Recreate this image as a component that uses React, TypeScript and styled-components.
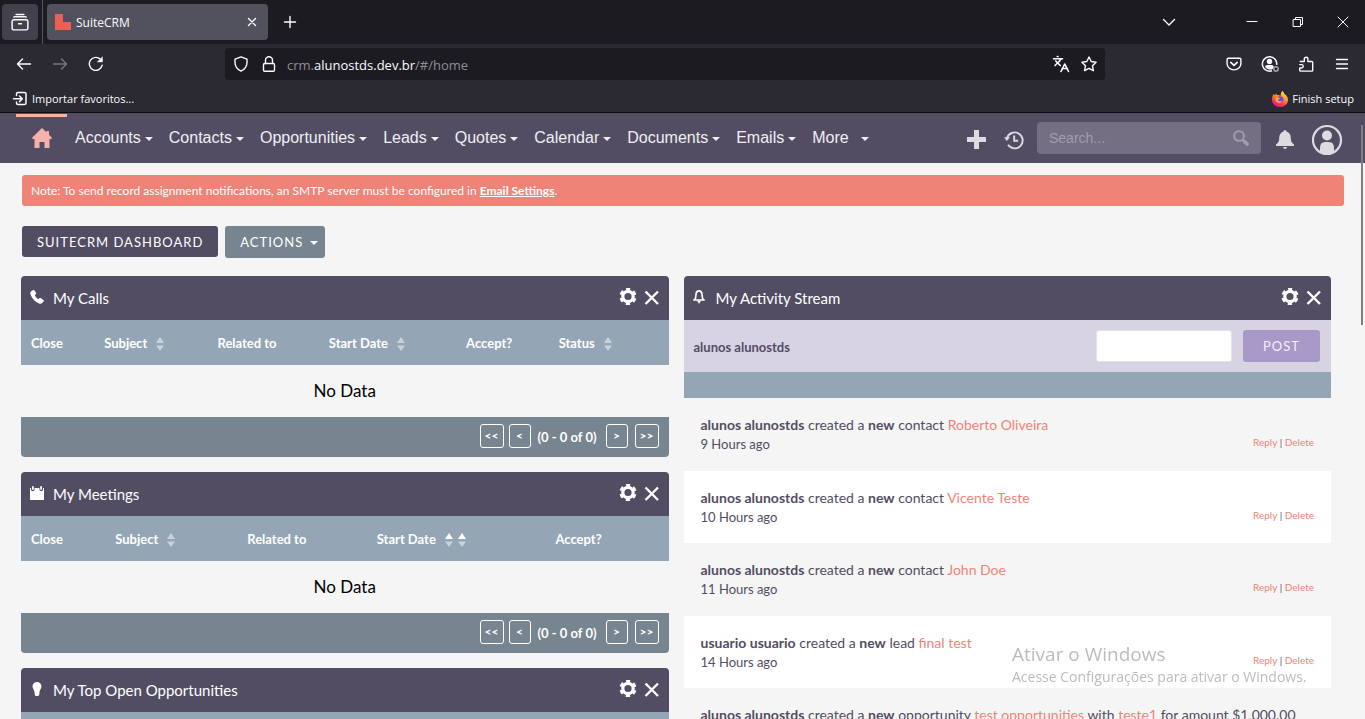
import React from 'react';
import styled, { createGlobalStyle, css } from 'styled-components';
import { Languages } from 'lucide-react';

const chromeFont = '"Open Sans", "Noto Sans", sans-serif';
const crmFont = 'Lato, "Liberation Sans", sans-serif';
const color = {
  purple: '#534d64',
  slate: '#778591',
  blue: '#94a6b5',
  coral: '#f08377',
  pink: '#f5b2aa',
  light: '#dddbe0',
  page: '#f5f5f5',
};

const GlobalStyle = createGlobalStyle`
  * { box-sizing: border-box; }
  body { margin: 0; background: ${color.page}; }
  button, input { font: inherit; color: inherit; margin: 0; }
  button { border: 0; background: none; padding: 0; }
  a { color: inherit; text-decoration: none; }
  svg { display: block; flex: none; }
`;

const Window = styled.div`
  display: flex;
  flex-direction: column;
  height: 100vh;
  overflow: hidden;
  position: relative;
`;

/* ---------- browser chrome ---------- */

const Chrome = styled.div`
  flex: none;
  background: #2b2a33;
  color: #fbfbfe;
  font: 12px/16px ${chromeFont};
  border-bottom: 1px solid #0c0c0d;
`;

const TabBar = styled.div`
  display: flex;
  align-items: center;
  height: 44px;
  background: #1c1b22;
`;

const FirefoxView = styled.button`
  display: grid;
  place-items: center;
  width: 36px;
  height: 36px;
  margin-left: 2px;
  border-radius: 4px;
  background: #42414d;
`;

const TabDivider = styled.span`
  width: 1px;
  align-self: stretch;
  margin: 0 4px;
  background: #55545c;
`;

const Tab = styled.div`
  display: flex;
  align-items: center;
  gap: 5px;
  width: 221px;
  height: 36px;
  padding: 0 8px;
  border-radius: 4px;
  background: #52525e;
`;

const TabTitle = styled.span`
  flex: 1;
  padding-top: 2px;
`;

const IconButton = styled.button<{ $w?: number }>`
  display: grid;
  place-items: center;
  flex: none;
  width: ${(p) => p.$w ?? 36}px;
  height: 32px;
`;

const TabControls = styled.div`
  display: flex;
  margin-left: auto;
  align-items: center;
`;

const Spacer = styled.span`
  width: 42px;
`;

const NavBar = styled.div`
  display: flex;
  align-items: center;
  height: 40px;
  padding: 0 5px 0 6px;
`;

const NavSide = styled.div<{ $end?: boolean }>`
  display: flex;
  flex: 1 1 0;
  justify-content: ${(p) => (p.$end ? 'flex-end' : 'flex-start')};
`;

const UrlBar = styled.div`
  display: flex;
  align-items: center;
  flex: 0 1 880px;
  margin-right: 36px;
  height: 32px;
  padding: 0 2px;
  border-radius: 4px;
  background: #1c1b22;
  font-size: 13px;
`;

const UrlText = styled.span`
  flex: 1;
  margin-left: 4px;
  padding-top: 2px;
  color: #8f8e96;
  b { font-weight: 400; color: #fbfbfe; }
`;

const Bookmarks = styled.div`
  display: flex;
  justify-content: space-between;
  align-items: center;
  height: 28px;
  padding: 0 11px 0 12px;
`;

const Bookmark = styled.button`
  display: flex;
  align-items: center;
  gap: 4px;
  padding-top: 2px;
  font-size: 11px;
`;

/* ---------- CRM ---------- */

const TopNav = styled.header`
  display: flex;
  flex: none;
  height: 50px;
  padding: 1px 14px 0 16px;
  background: ${color.purple};
  color: ${color.light};
  font: 16px/20px "Liberation Sans", Arial, sans-serif;
`;

const HomeLink = styled.a`
  display: flex;
  justify-content: center;
  width: 51px;
  padding-top: 11px;
  border-top: 3px solid ${color.pink};
  color: ${color.pink};
`;

const Menu = styled.nav`
  display: flex;
  align-items: center;
  height: 48px;
`;

const MenuItem = styled.button<{ $gap?: number }>`
  display: flex;
  align-items: center;
  gap: ${(p) => p.$gap ?? 4}px;
  padding: 0 8px;
  color: #f0eff2;
  white-space: nowrap;
`;

const Caret = styled.span`
  margin-top: 2px;
  border: 4px solid transparent;
  border-top-color: currentColor;
  border-bottom: 0;
`;

const TopTools = styled.div`
  display: flex;
  align-items: center;
  margin-left: auto;
`;

const ToolButton = styled.button<{ $w: number }>`
  display: grid;
  place-items: center;
  width: ${(p) => p.$w}px;
  height: 34px;
  padding-top: 2px;
`;

const SearchBox = styled.label`
  display: flex;
  align-items: center;
  width: 224px;
  height: 32px;
  margin: 0 6px 2px 4px;
  padding: 0 12px;
  border-radius: 4px;
  background: #756f83;
  color: #a29eac;
  font-size: 14px;
  input {
    flex: 1;
    min-width: 0;
    border: 0;
    padding: 0;
    outline: 0;
    background: none;
    &::placeholder { color: #a29eac; opacity: 1; }
  }
`;

const Page = styled.main`
  flex: 1;
  min-height: 0;
  overflow-y: auto;
  scrollbar-width: none;
  padding: 12px 21px 0;
  background: ${color.page};
  color: ${color.purple};
  font: 14px/18px ${crmFont};
`;

const Notice = styled.p`
  margin: 0 0 20px 1px;
  padding: 0 9px;
  border-radius: 3px;
  background: ${color.coral};
  color: #fff;
  font-size: 12px;
  line-height: 31px;
  a { font-weight: 700; text-decoration: underline; }
`;

const Actions = styled.div`
  display: flex;
  align-items: flex-start;
  gap: 7px;
  height: 50px;
  margin-left: 1px;
`;

const ActionButton = styled.button<{ $muted?: boolean }>`
  display: flex;
  align-items: center;
  gap: 7px;
  height: ${(p) => (p.$muted ? 32 : 31)}px;
  padding: 0 ${(p) => (p.$muted ? 7 : 15)}px 0 15px;
  border-radius: 3px;
  background: ${(p) => (p.$muted ? color.slate : color.purple)};
  color: #fff;
  font-size: 13px;
  letter-spacing: 1px;
  text-transform: uppercase;
`;

const Columns = styled.div`
  display: grid;
  grid-template-columns: minmax(0, 1fr) minmax(0, 1fr);
  gap: 15px;
  margin-right: 13px;
`;

const Stack = styled.div`
  display: flex;
  flex-direction: column;
  gap: 15px;
`;

const Card = styled.section`
  border-radius: 4px;
  overflow: hidden;
`;

const CardHead = styled.div`
  display: flex;
  height: 44px;
  padding: 11px 8px 0 8px;
  background: ${color.purple};
  color: #fff;
`;

const CardIcon = styled.span`
  display: grid;
  place-items: center;
  width: 15px;
  height: 20px;
`;

const CardTitle = styled.h2`
  flex: 1;
  margin: 0 0 0 9px;
  font-size: 15px;
  font-weight: 400;
  line-height: 22px;
`;

const CardButton = styled.button`
  width: 18px;
  height: 20px;
  margin-left: 6px;
`;

const Table = styled.table`
  width: 100%;
  table-layout: fixed;
  border-collapse: collapse;
  th {
    height: 45px;
    padding: 0 0 0 10px;
    background: ${color.blue};
    color: #fff;
    font-size: 13px;
    font-weight: 700;
    text-align: left;
    white-space: nowrap;
  }
  td {
    height: 52px;
    padding: 0;
    text-align: center;
    color: #000;
    font-size: 17px;
  }
`;

const HeadCell = styled.span`
  display: flex;
  align-items: center;
  gap: 5px;
`;

const SortButton = styled.button<{ $first?: boolean }>`
  padding-top: 2px;
  ${(p) => p.$first && css`margin-left: 4px;`}
`;

const Pager = styled.div`
  display: flex;
  justify-content: flex-end;
  height: 40px;
  padding: 7px 10px 0 0;
  background: ${color.slate};
  color: #fff;
  font-size: 13px;
  font-weight: 700;
  line-height: 26px;
`;

const PageGroup = styled.div<{ $gap: number }>`
  display: flex;
  gap: ${(p) => p.$gap}px;
`;

const PagerCount = styled.span`
  margin: 0 9px 0 7px;
`;

const PageButton = styled.button<{ $wide?: boolean }>`
  width: ${(p) => (p.$wide ? 24 : 22)}px;
  height: 24px;
  border: 1px solid #fff;
  border-radius: 3px;
  font-size: 12px;
  line-height: 20px;
`;

const PostForm = styled.form`
  display: flex;
  align-items: center;
  height: 52px;
  padding: 0 11px 0 10px;
  background: #d8d3e3;
  label {
    flex: 1;
    font-size: 13px;
    font-weight: 700;
    padding-top: 2px;
  }
  input {
    width: 136px;
    height: 32px;
    border: 1px solid #e5e2ec;
    border-radius: 3px;
    background: #fff;
  }
`;

const PostButton = styled.button`
  width: 77px;
  height: 32px;
  margin-left: 11px;
  border-radius: 3px;
  background: #a999c8;
  color: #f3f0f8;
  font-size: 13px;
  letter-spacing: 1px;
`;

const Strip = styled.div`
  height: 26px;
  background: ${color.blue};
`;

const Feed = styled.ul`
  margin: 0;
  padding: 0;
  list-style: none;
`;

const Entry = styled.li`
  height: 73px;
  padding: 18px 17px;
  &:nth-child(even) { height: 72px; background: #fff; }
  p { margin: 0; white-space: nowrap; }
  a { color: ${color.coral}; }
`;

const EntryMeta = styled.div`
  display: flex;
  justify-content: space-between;
  font-size: 13px;
  line-height: 20px;
  small { font-size: 10px; line-height: 16px; }
`;

const Watermark = styled.div`
  position: absolute;
  right: 52px;
  bottom: 31px;
  width: 301px;
  color: #bcbcbc;
  font: 14px/22px ${chromeFont};
  white-space: nowrap;
  pointer-events: none;
  strong { display: block; font-size: 19px; font-weight: 400; line-height: 24px; }
`;

const ScrollThumb = styled.div`
  position: absolute;
  top: 125px;
  right: 2px;
  width: 2px;
  height: 200px;
  background: #7f7f7f;
`;

/* ---------- icons ---------- */

const Line = ({ size = 16, w = 1.4, children }: { size?: number; w?: number; children: React.ReactNode }) => (
  <svg width={size} height={size} viewBox="0 0 16 16" fill="none" stroke="currentColor" strokeWidth={w} strokeLinecap="round" strokeLinejoin="round">
    {children}
  </svg>
);

const FirefoxLogo = () => (
  <svg width="16" height="16" viewBox="0 0 16 16">
    <defs>
      <linearGradient id="fx" x1=".8" y1="0" x2=".3" y2="1">
        <stop offset="0" stopColor="#fff14f" />
        <stop offset=".4" stopColor="#ff9a24" />
        <stop offset=".75" stopColor="#ff3750" />
        <stop offset="1" stopColor="#e5167e" />
      </linearGradient>
    </defs>
    <path fill="url(#fx)" d="M10.2 0c1.5 1 2 2 2.2 3.1C14.5 4.400 16 6.300 16 8.700 16 13 12.400 16 8 16S0 12.700 0 8.400C0 6 .8 4 2 2.800l.5 1.600C3.300 3.500 3.900 3 4.300 2.500l.5 1.700c1.600-.3 2.900.2 3.800 1C8.500 3 9.200 1.300 10.200 0z" />
    <circle cx="8.200" cy="8.400" r="3.200" fill="#7542e5" />
    <path fill="#ffb52e" d="M3.500 7.200c1.700-1.200 3.500-1 4.800.2-1 .2-1.600 1.200-2.600 1.400.7 1.700 3 2 4.600.6-.8 3-5.300 3.400-6.500.3-.3-.9-.4-1.700-.3-2.500z" />
  </svg>
);

const PhoneIcon = () => (
  <svg width="14" height="14" viewBox="0 0 14 14" fill="currentColor">
    <path d="M2.800.3 1.200 1.300C.2 2 .1 3.200.6 4.600c1.400 4 4.600 7.500 8.400 8.900 1.400.5 2.900.3 3.600-.9l1.100-1.400c.3-.5.2-1-.3-1.300l-2.700-1.800c-.5-.3-1-.2-1.400.2l-1 1C6.800 8.300 5.600 7 4.800 5.200l1-1c.4-.4.5-.9.2-1.400L4.500.6C4.100 0 3.400-.1 2.800.3z" />
  </svg>
);

const CalendarIcon = () => (
  <svg width="14" height="14" viewBox="0 0 14 14" fill="currentColor">
    <path d="M0 2h1v1.500A1.500 1.500 0 0 0 4.500 3.500V2h5v1.500a1.500 1.500 0 0 0 3.500 0V2h1v12H0z" />
    <rect x="2" y="0" width="1.800" height="4" rx=".9" />
    <rect x="10.200" y="0" width="1.800" height="4" rx=".9" />
  </svg>
);

const BulbIcon = () => (
  <svg width="10" height="14" viewBox="0 0 10 14" fill="currentColor">
    <path d="M5 0a4.500 4.500 0 0 1 4.500 4.500C9.500 6.500 7.900 7.700 7.600 9.500L7.300 12.500C7.200 13.500 6 14 5 14s-2.200-.5-2.300-1.500L2.400 9.500C2.100 7.700.5 6.500.5 4.500A4.500 4.500 0 0 1 5 0z" />
  </svg>
);

const BellOutline = () => (
  <svg width="12" height="14" viewBox="0 0 12 14" fill="none" stroke="currentColor" strokeWidth="1.600">
    <path d="M.2 10h11.600M1.500 10C3 8.500 2.700 6.500 3 4.300 3.200 2 4.300.9 6 .9s2.800 1.100 3 3.400c.3 2.200 0 4.200 1.500 5.700" />
    <path d="M4 10.700h4L6 13.800z" fill="currentColor" stroke="none" />
  </svg>
);

const GearIcon = () => (
  <svg width="18" height="18" viewBox="0 1 18 18">
    <g fill="none" stroke="currentColor">
      <circle cx="9" cy="9.500" r="5.200" strokeWidth="3.200" />
      <circle cx="9" cy="9.500" r="7.300" strokeWidth="2.600" strokeDasharray="4.200 3.440" strokeDashoffset="2.100" transform="rotate(-90 9 9.500)" />
    </g>
  </svg>
);

const CrossIcon = () => (
  <svg width="18" height="18" viewBox="0 0 18 18" fill="none" stroke="currentColor" strokeWidth="2.400">
    <path d="M2.500 3.500l12.500 12.500M15 3.500L2.500 16" />
  </svg>
);

const SortIcon = ({ up }: { up?: boolean }) => (
  <svg width="8" height="14" viewBox="0 0 8 14" fill="#c9d2da">
    <path d="M0 6l4-6 4 6z" fill={up ? '#fff' : undefined} />
    <path d="M0 8.500h8l-4 5.500z" />
  </svg>
);

/* ---------- parts ---------- */

type Col = { label: string; width: number; sorts?: boolean[] };

const WidgetHead = ({ icon, title }: { icon: React.ReactNode; title: string }) => (
  <CardHead>
    <CardIcon>{icon}</CardIcon>
    <CardTitle>{title}</CardTitle>
    <CardButton aria-label={`Edit ${title}`}><GearIcon /></CardButton>
    <CardButton aria-label={`Close ${title}`}><CrossIcon /></CardButton>
  </CardHead>
);

const ListWidget = ({ icon, title, cols }: { icon: React.ReactNode; title: string; cols: Col[] }) => (
  <Card>
    <WidgetHead icon={icon} title={title} />
    <Table>
      <colgroup>
        {cols.map((c) => <col key={c.label} style={{ width: `${c.width}%` }} />)}
      </colgroup>
      <thead>
        <tr>
          {cols.map((c) => (
            <th key={c.label} scope="col">
              <HeadCell>
                {c.label}
                {c.sorts?.map((up, i) => (
                  <SortButton key={i} $first={i === 0} aria-label={`Sort by ${c.label}`}><SortIcon up={up} /></SortButton>
                ))}
              </HeadCell>
            </th>
          ))}
        </tr>
      </thead>
      <tbody>
        <tr><td colSpan={cols.length}>No Data</td></tr>
      </tbody>
    </Table>
    <Pager>
      <PageGroup $gap={5}>
        <PageButton $wide aria-label="First page">&lt;&lt;</PageButton>
        <PageButton aria-label="Previous page">&lt;</PageButton>
      </PageGroup>
      <PagerCount>(0 - 0 of 0)</PagerCount>
      <PageGroup $gap={7}>
        <PageButton aria-label="Next page">&gt;</PageButton>
        <PageButton $wide aria-label="Last page">&gt;&gt;</PageButton>
      </PageGroup>
    </Pager>
  </Card>
);

const callCols: Col[] = [
  { label: 'Close', width: 11.3 },
  { label: 'Subject', width: 17.5, sorts: [false] },
  { label: 'Related to', width: 17.2 },
  { label: 'Start Date', width: 21.2, sorts: [false] },
  { label: 'Accept?', width: 14.3 },
  { label: 'Status', width: 18.5, sorts: [false] },
];

const meetingCols: Col[] = [
  { label: 'Close', width: 13 },
  { label: 'Subject', width: 20.4, sorts: [false] },
  { label: 'Related to', width: 20 },
  { label: 'Start Date', width: 27.6, sorts: [true, true] },
  { label: 'Accept?', width: 19 },
];

const opportunityCols: Col[] = [
  { label: 'Opportunity Name', width: 50 },
  { label: 'Amount', width: 50 },
];

const menu = ['Accounts', 'Contacts', 'Opportunities', 'Leads', 'Quotes', 'Calendar', 'Documents', 'Emails'];

const entries: { user: string; body: React.ReactNode; age: string }[] = [
  { user: 'alunos alunostds', body: <>contact <a href="#/contact">Roberto Oliveira</a></>, age: '9 Hours ago' },
  { user: 'alunos alunostds', body: <>contact <a href="#/contact">Vicente Teste</a></>, age: '10 Hours ago' },
  { user: 'alunos alunostds', body: <>contact <a href="#/contact">John Doe</a></>, age: '11 Hours ago' },
  { user: 'usuario usuario', body: <>lead <a href="#/lead">final test</a></>, age: '14 Hours ago' },
  {
    user: 'alunos alunostds',
    body: <>opportunity <a href="#/opportunity">test opportunities</a> with <a href="#/account">teste1</a> for amount $1,000.00</>,
    age: '14 Hours ago',
  },
];

const BrowserChrome = () => (
  <Chrome>
    <TabBar>
      <FirefoxView aria-label="View recent browsing">
        <Line size={18} w={1.3}><path d="M4.500 1.300h7M2.500 3.600q.2-.3 1-.3h9q.800 0 1 .3" /><rect x="1" y="6" width="14" height="9" rx="1.500" /><path d="M6.700 9.500h2.600" /></Line>
      </FirefoxView>
      <TabDivider />
      <Tab>
        <svg width="16" height="16" viewBox="0 0 16 16"><path fill="#534d64" d="M8 0h8v8H8z" /><path fill="#ea6153" d="M0 0h8v8h8v8H0z" /></svg>
        <TabTitle>SuiteCRM</TabTitle>
        <IconButton $w={16} aria-label="Close tab"><Line><path d="M4.500 4.500l7 7M11.500 4.500l-7 7" /></Line></IconButton>
      </Tab>
      <IconButton $w={44} aria-label="New tab"><Line><path d="M8 2.500v11M2.500 8h11" /></Line></IconButton>
      <TabControls>
        <IconButton aria-label="List all tabs"><Line><path d="M2.500 5.500L8 11l5.500-5.500" /></Line></IconButton>
        <Spacer />
        <IconButton $w={46} aria-label="Minimize"><Line w={1}><path d="M3 7.500h10" /></Line></IconButton>
        <IconButton $w={46} aria-label="Restore"><Line w={1}><path d="M3.500 5.500h7v7h-7zM5.500 5.500v-2h7v7h-2" /></Line></IconButton>
        <IconButton $w={44} aria-label="Close"><Line w={1}><path d="M3 3l10 10M13 3L3 13" /></Line></IconButton>
      </TabControls>
    </TabBar>
    <NavBar>
      <NavSide>
        <IconButton aria-label="Back"><Line><path d="M14.500 8H1.500M6.500 3l-5 5 5 5" /></Line></IconButton>
        <IconButton aria-label="Forward"><svg width="16" height="16" viewBox="0 0 16 16" fill="none" stroke="#77767f" strokeWidth="1.400" strokeLinecap="round" strokeLinejoin="round"><path d="M1.500 8h13M9.500 3l5 5-5 5" /></svg></IconButton>
        <IconButton aria-label="Reload"><Line><path d="M14.200 9.200A6.500 6.500 0 1 1 12.500 3.300" /><path d="M14.500 1v5H9.500z" fill="currentColor" strokeWidth=".4" /></Line></IconButton>
      </NavSide>
      <UrlBar>
        <IconButton $w={28} aria-label="Tracking protection"><Line><path d="M8 .9l6 2.300v3.300c0 4-2.300 6.800-6 8.600-3.700-1.800-6-4.600-6-8.600V3.200z" /></Line></IconButton>
        <IconButton $w={28} aria-label="Site information"><Line><rect x="2.500" y="7.500" width="11" height="7.800" rx="1.200" /><path d="M4.500 7.500V4.200a3.500 3.500 0 0 1 7 0v3.300" /></Line></IconButton>
        <UrlText>crm.<b>alunostds.dev.br</b>/#/home</UrlText>
        <IconButton $w={28} aria-label="Translate page"><Languages size={18} strokeWidth={2.2} /></IconButton>
        <IconButton $w={28} aria-label="Bookmark this page"><Line><path d="M8 1l2.200 4.500 4.900.7-3.600 3.500.9 5L8 12.300l-4.400 2.400.9-5L.9 6.200l4.900-.7z" /></Line></IconButton>
      </UrlBar>
      <NavSide $end>
        <IconButton aria-label="Save to Pocket"><Line><path d="M2.300 2.200h11.400q1.200 0 1.200 1.200v4A6.900 6.500 0 0 1 1.100 7.400v-4q0-1.200 1.200-1.200z" /><path d="M4.800 6.300L8 9.300l3.200-3" strokeWidth="1.600" /></Line></IconButton>
        <IconButton aria-label="Account">
          <svg width="18" height="18" viewBox="0 0 18 18" fill="none" stroke="currentColor" strokeWidth="1.500">
            <path d="M11 15.700A7.200 7.200 0 1 1 15.700 9.800" />
            <circle cx="8.500" cy="6.500" r="2.700" fill="currentColor" stroke="none" />
            <path d="M4 12q0-2 2.500-2h4q2 0 2.300 1.500l-1 2.500q-4 2-7.800-2z" fill="currentColor" stroke="none" />
            <circle cx="15" cy="14" r="2.200" stroke="#a3a2a9" />
          </svg>
        </IconButton>
        <IconButton aria-label="Extensions"><Line><path d="M2.300 5.500h4V3a1.800 1.800 0 0 1 3.600 0v2.500h4q.800 0 .800.800v8q0 .800-.800.800H2.500q-.800 0-.800-.800V12h1.800a1.700 1.700 0 0 0 0-3.400H1.700" /></Line></IconButton>
        <IconButton aria-label="Open application menu"><Line w={1.3}><path d="M2.500 3.500h11M2.500 8h11M2.500 12.500h11" /></Line></IconButton>
      </NavSide>
    </NavBar>
    <Bookmarks>
      <Bookmark>
        <Line w={1.5}><path d="M4.500 4.500V3q0-1.500 1.500-1.500h6.500q1.500 0 1.500 1.500v9q0 1.500-1.500 1.500H6q-1.500 0-1.500-1.500V11M1.500 7.800h8.500M7.500 5L10.300 7.800l-2.800 2.800" /></Line>
        Importar favoritos...
      </Bookmark>
      <Bookmark><FirefoxLogo />Finish setup</Bookmark>
    </Bookmarks>
  </Chrome>
);

export default function App() {
  return (
    <Window>
      <GlobalStyle />
      <BrowserChrome />
      <TopNav>
        <HomeLink href="#/home" aria-label="Home">
          <svg width="20" height="20" viewBox="0 0 20 20" fill="currentColor"><path d="M10 0l4.500 4.300V3H17v3.700L19.700 9.500V11h-2.200v9h-5v-6h-5v6h-5v-9H.3V9.500z" /></svg>
        </HomeLink>
        <Menu>
          {menu.map((m) => <MenuItem key={m}>{m}<Caret /></MenuItem>)}
          <MenuItem $gap={12}>More<Caret /></MenuItem>
        </Menu>
        <TopTools>
          <ToolButton $w={38} aria-label="Quick create"><svg width="19" height="19" viewBox="0 0 19 19" fill="currentColor"><path d="M7 0h5v7h7v5h-7v7H7v-7H0V7h7z" /></svg></ToolButton>
          <ToolButton $w={38} aria-label="Recently viewed">
            <svg width="20" height="20" viewBox="0 0 20 20" fill="none" stroke="currentColor" strokeWidth="1.900"><path d="M3 8.200A8 8 0 1 1 4 14.800M10.200 5.500v5.300h4" /><path d="M0 7.200h6L2.800 11z" fill="currentColor" stroke="none" /></svg>
          </ToolButton>
          <SearchBox>
            <input type="text" placeholder="Search..." aria-label="Search" />
            <svg width="16" height="16" viewBox="0 0 16 16" fill="none" stroke="currentColor"><circle cx="6" cy="6" r="4.900" strokeWidth="1.900" /><path d="M9.500 9.500l1.500 1.500" strokeWidth="2" /><path d="M11.500 11.500l2.600 2.600" strokeWidth="3.600" strokeLinecap="round" /></svg>
          </SearchBox>
          <ToolButton $w={36} aria-label="Notifications"><svg width="18" height="19" viewBox="0 0 18 19" fill="currentColor"><path d="M9 0q1.400 0 1.500 1.500C13.500 2.300 14.800 5 14.800 8c0 3.500 1 5 3.200 6.500V16H0v-1.500C2.200 13 3.200 11.500 3.200 8c0-3 1.300-5.700 4.300-6.500Q7.600 0 9 0zM7 17h4q-.3 2-2 2t-2-2z" /></svg></ToolButton>
          <ToolButton $w={48} aria-label="User menu"><svg width="32" height="32" viewBox="0 0 32 32" fill="currentColor"><circle cx="16" cy="16" r="14" fill="none" stroke="currentColor" strokeWidth="2.200" /><circle cx="16" cy="11.500" r="5" /><path d="M9 28v-4q0-6 5-6h4q5 0 5 6v4q-7 4-14 0z" /></svg></ToolButton>
        </TopTools>
      </TopNav>
      <Page>
        <Notice>
          Note: To send record assignment notifications, an SMTP server must be configured in <a href="#/email-settings">Email Settings</a>.
        </Notice>
        <Actions>
          <ActionButton>SuiteCRM Dashboard</ActionButton>
          <ActionButton $muted>Actions<Caret /></ActionButton>
        </Actions>
        <Columns>
          <Stack>
            <ListWidget icon={<PhoneIcon />} title="My Calls" cols={callCols} />
            <ListWidget icon={<CalendarIcon />} title="My Meetings" cols={meetingCols} />
            <ListWidget icon={<BulbIcon />} title="My Top Open Opportunities" cols={opportunityCols} />
          </Stack>
          <Card>
            <WidgetHead icon={<BellOutline />} title="My Activity Stream" />
            <PostForm onSubmit={(e) => e.preventDefault()}>
              <label htmlFor="post">alunos alunostds</label>
              <input id="post" type="text" />
              <PostButton type="submit">POST</PostButton>
            </PostForm>
            <Strip />
            <Feed>
              {entries.map((e, i) => (
                <Entry key={i}>
                  <p><b>{e.user}</b> created a <b>new</b> {e.body}</p>
                  <EntryMeta>
                    {e.age}
                    <small><a href="#/reply">Reply</a> | <a href="#/delete">Delete</a></small>
                  </EntryMeta>
                </Entry>
              ))}
            </Feed>
          </Card>
        </Columns>
      </Page>
      <Watermark><strong>Ativar o Windows</strong>Acesse Configurações para ativar o Windows.</Watermark>
      <ScrollThumb />
    </Window>
  );
}
